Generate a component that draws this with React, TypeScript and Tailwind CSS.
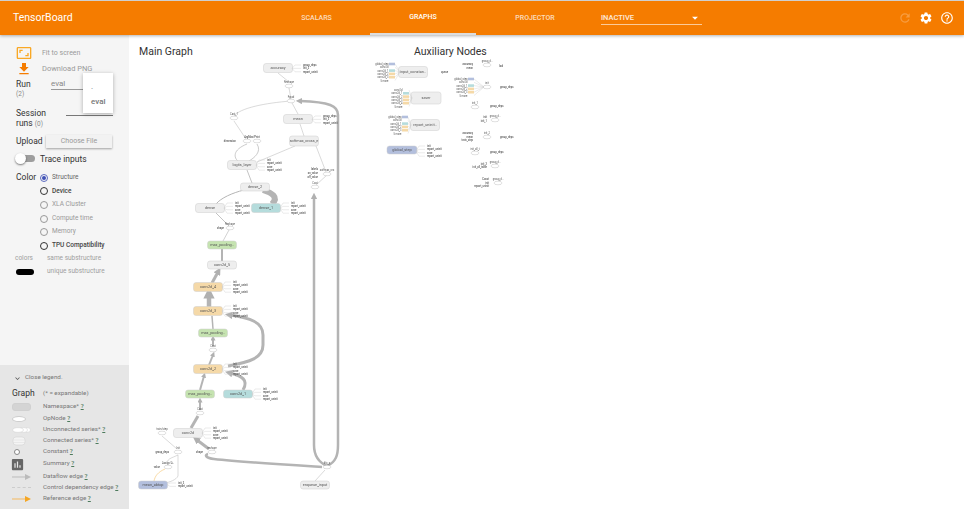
import React from 'react';
import { MdAspectRatio, MdFileDownload, MdHelpOutline, MdInsertChart, MdRefresh, MdSettings, MdArrowDropDown, MdExpandMore } from 'react-icons/md';

// --- Graph data (page coordinates, the svg viewBox shifts them into the canvas) ---

const GRAY = '#eeeeee';
const ORANGE = '#f5d9a8';
const GREEN = '#c5e3b0';
const TEAL = '#b5dcdc';
const BLUE = '#b3bfdd';

type GNode = { x: number; y: number; label: string; fill?: string; w?: number; h?: number };

const nodes: GNode[] = [
    { x: 278, y: 68, label: 'accuracy' },
    { x: 298, y: 119, label: 'mean' },
    { x: 304, y: 141, label: 'softmax_cross_e', h: 10 },
    { x: 242, y: 165, label: 'logits_layer' },
    { x: 255, y: 187, label: 'dense_2', h: 8 },
    { x: 210, y: 208, label: 'dense' },
    { x: 266, y: 208, label: 'dense_1', fill: TEAL },
    { x: 222, y: 245, label: 'max_pooling..', fill: GREEN, h: 8 },
    { x: 222, y: 265, label: 'conv2d_5', h: 8 },
    { x: 208, y: 287, label: 'conv2d_4', fill: ORANGE },
    { x: 208, y: 311, label: 'conv2d_3', fill: ORANGE },
    { x: 213, y: 333, label: 'max_pooling..', fill: GREEN, h: 8 },
    { x: 208, y: 369, label: 'conv2d_2', fill: ORANGE },
    { x: 200, y: 394, label: 'max_pooling..', fill: GREEN, h: 8 },
    { x: 238, y: 394, label: 'conv2d_1', fill: TEAL, h: 8 },
    { x: 188, y: 433, label: 'conv2d' },
    { x: 153, y: 485, label: 'mean_abtop', fill: BLUE, h: 8 },
    { x: 315, y: 485, label: 'enqueue_input', h: 8 },
    // auxiliary nodes
    { x: 413, y: 72, label: 'input_constan..', h: 11 },
    { x: 426, y: 98, label: 'saver', w: 30, h: 12 },
    { x: 425, y: 125, label: 'report_uninit..', h: 11 },
    { x: 402, y: 150, label: 'global_step', fill: BLUE, w: 30, h: 8 },
];

type GEdge = { d: string; w?: number; c?: string; arrow?: boolean };

const edges: GEdge[] = [
    { d: 'M278 73L289 82' },
    { d: 'M289 88L291 99' },
    { d: 'M291 101C265 103 240 108 234 116' },
    { d: 'M298 114L292 103' },
    { d: 'M304 136L300 124' },
    { d: 'M295 146L257 162' },
    { d: 'M316 146L326 172' },
    { d: 'M327 175L316 185' },
    { d: 'M234 121L246 139' },
    { d: 'M247 144C232 150 234 158 238 161', w: 0.7 },
    { d: 'M257 144C262 152 254 158 249 161', w: 0.7 },
    { d: 'M247 170L252 183', w: 0.8 },
    { d: 'M244 190C232 193 221 198 216 204', w: 1 },
    { d: 'M263 190C272 193 279 197 272 204', w: 6 },
    { d: 'M216 213L229 226', w: 0.8 },
    { d: 'M229 230L223 241', w: 0.6 },
    { d: 'M222 249L222 261', w: 2 },
    { d: 'M212 283L218 272', w: 3, arrow: true },
    { d: 'M209 307L209 295', w: 4.5, arrow: true },
    { d: 'M213 329L212 316', w: 1.5 },
    { d: 'M213 346L213 339', w: 2, arrow: true },
    { d: 'M209 365L213 355', w: 2, arrow: true },
    { d: 'M228 366C250 362 263 358 263 345L263 335C263 322 250 318 230 315', w: 3, arrow: true },
    { d: 'M243 390C249 380 242 376 230 373', w: 3, arrow: true },
    { d: 'M200 390L204 376', w: 2, arrow: true },
    { d: 'M200 410L200 401', w: 2, arrow: true },
    { d: 'M191 428L198 416', w: 3 },
    { d: 'M209 449L197 440', w: 3, arrow: true },
    { d: 'M322 467C290 465 240 462 214 459C206 458 204 455 208 454', w: 2.5 },
    { d: 'M327 466C318 462 314 455 314 445L314 197', w: 2.5, arrow: true },
    { d: 'M327 466C336 462 338 455 338 445L338 115C338 106 330 102 300 101', w: 2.5, arrow: true },
    { d: 'M315 481L325 470', w: 0.5 },
    { d: 'M162 436L177 449', w: 0.5 },
    { d: 'M178 455C172 458 165 459 168 465', w: 0.5 },
    { d: 'M178 455L178 476C176 480 170 482 165 483', w: 0.5 },
    { d: 'M165 469C158 472 155 476 154 481', w: 0.6, c: '#f5c26b' },
];

type Oval = { x: number; y: number; label?: string; w?: number };

const ovals: Oval[] = [
    { x: 289, y: 86, label: 'Reshape' },
    { x: 291, y: 101, label: 'Fgrad' },
    { x: 234, y: 118, label: 'Cast_1' },
    { x: 247, y: 141 },
    { x: 257, y: 141, label: '' },
    { x: 327, y: 174, label: 'softmax_cro' },
    { x: 315, y: 187, label: 'Cast' },
    { x: 230, y: 228, label: 'Reshape' },
    { x: 213, y: 350, label: 'Cast' },
    { x: 200, y: 413, label: 'Cast' },
    { x: 212, y: 452, label: 'reshape' },
    { x: 327, y: 467, label: 'fifo_q' },
    { x: 162, y: 433, label: 'train/step' },
    { x: 178, y: 452, label: 'Init' },
    { x: 168, y: 467, label: 'Assign/A..' },
    { x: 487, y: 65, label: 'group_d..' },
    { x: 487, y: 87, label: 'init' },
    { x: 475, y: 107, label: 'init_1' },
    { x: 495, y: 120, label: 'group_d..' },
    { x: 487, y: 137, label: 'init_2' },
    { x: 475, y: 153, label: 'init_all_t' },
    { x: 495, y: 166, label: 'group_d..' },
    { x: 498, y: 183, label: 'group_d..' },
];

const INIT = ['init', 'report_uninit', 'save', 'report_uninit'];

// annotations hanging off the right side of a node
const annotations: { x: number; y: number; labels: string[]; step?: number }[] = [
    { x: 293, y: 65, labels: ['group_deps', 'init_2', 'report_uninit'] },
    { x: 313, y: 116, labels: ['group_deps', 'init_2', 'report_uninit'] },
    { x: 257, y: 160, labels: INIT },
    { x: 225, y: 203, labels: INIT },
    { x: 281, y: 203, labels: INIT },
    { x: 223, y: 282, labels: INIT },
    { x: 223, y: 306, labels: INIT },
    { x: 223, y: 364, labels: INIT },
    { x: 253, y: 389, labels: INIT },
    { x: 203, y: 428, labels: INIT },
    { x: 168, y: 483, labels: ['init_2', 'report_uninit'] },
    { x: 417, y: 146, labels: INIT },
];

// tiny free standing labels: [x, y, text, anchor]
const labels: [number, number, string, 'start' | 'end' | 'middle'][] = [
    [236, 142, 'dimension', 'end'],
    [252, 137.5, 'ArgMax/Print', 'middle'],
    [318, 170, 'labels', 'end'],
    [318, 174, 'on_value', 'end'],
    [318, 177.5, 'off_value', 'end'],
    [224, 229, 'shape', 'end'],
    [203, 453, 'shape', 'end'],
    [169, 453, 'group_deps', 'end'],
    [160, 468, 'value', 'end'],
    [441, 73, 'queue', 'start'],
    [473, 65, 'accuracy', 'end'],
    [473, 69, 'mean', 'end'],
    [499, 67, 'loal', 'start'],
    [500, 88, 'group_deps', 'start'],
    [490, 107, 'group_deps', 'start'],
    [487, 118, 'init', 'end'],
    [487, 122, 'init_1', 'end'],
    [473, 134, 'accuracy', 'end'],
    [473, 138, 'mean', 'end'],
    [473, 141, 'train_step', 'end'],
    [500, 138, 'group_deps', 'start'],
    [490, 153, 'group_deps', 'start'],
    [487, 165, 'init_2', 'end'],
    [487, 168, 'init_all_table', 'end'],
    [489, 180, 'Const', 'end'],
    [489, 184, 'init', 'end'],
    [489, 187, 'report_uninit', 'end'],
];

// input stacks on the left of the auxiliary nodes
const stacks: { x: number; y: number; toX: number; items: [string, string?][] }[] = [
    { x: 394, y: 64, toX: 399, items: [['global_step', BLUE], ['conv2d'], ['conv2d_1', TEAL], ['conv2d_2', ORANGE], ['conv2d_3', ORANGE], ['5 more']] },
    { x: 408, y: 90, toX: 411, items: [['conv2d'], ['conv2d_1', TEAL], ['conv2d_2', ORANGE], ['conv2d_3', ORANGE], ['conv2d_4', ORANGE], ['5 more']] },
    { x: 407, y: 117, toX: 410, items: [['global_step', BLUE], ['conv2d'], ['conv2d_1', TEAL], ['conv2d_2', ORANGE], ['conv2d_3', ORANGE], ['5 more']] },
    { x: 473, y: 79, toX: 483, items: [['global_step', BLUE], ['conv2d'], ['conv2d_1', TEAL], ['conv2d_2', ORANGE], ['conv2d_3', ORANGE], ['5 more']] },
];

const GraphCanvas = () => (
    <svg viewBox="129 35 835 474" className="absolute inset-0 h-full w-full">
        <defs>
            <marker id="head" markerWidth="2.5" markerHeight="2.5" refX="0.8" refY="1.25" orient="auto">
                <path d="M0 0L2.5 1.25L0 2.5z" fill="#b0b0b0" />
            </marker>
        </defs>
        {edges.map((e, i) => (
            <path
                key={i}
                d={e.d}
                fill="none"
                stroke={e.c ?? '#b4b4b4'}
                strokeWidth={e.w ?? 0.5}
                markerEnd={e.arrow ? 'url(#head)' : undefined}
            />
        ))}
        {ovals.map((o, i) => (
            <g key={i}>
                <ellipse cx={o.x} cy={o.y} rx={(o.w ?? 8) / 2} ry={1.8} fill="#fff" stroke="#999" strokeWidth={0.3} />
                {o.label && <text x={o.x} y={o.y - 3} fontSize={2.6} textAnchor="middle" fill="#555">{o.label}</text>}
            </g>
        ))}
        {nodes.map((n) => {
            const w = n.w ?? 29;
            const h = n.h ?? 9;
            return (
                <g key={n.label + n.y}>
                    <rect x={n.x - w / 2} y={n.y - h / 2} width={w} height={h} rx={2.5} fill={n.fill ?? GRAY} stroke="#cfcfcf" strokeWidth={0.5} />
                    <text x={n.x} y={n.y + 1.3} fontSize={3.8} textAnchor="middle" fill="#555">{n.label}</text>
                </g>
            );
        })}
        {annotations.map((a, i) => {
            const step = a.step ?? 3.4;
            const mid = a.y + ((a.labels.length - 1) * step) / 2;
            return (
                <g key={i}>
                    {a.labels.map((t, j) => {
                        const y = a.y + j * step;
                        return (
                            <g key={j}>
                                <path d={`M${a.x - 1} ${mid}L${a.x + 2} ${y}L${a.x + 8} ${y}`} fill="none" stroke="#ccc" strokeWidth={0.4} />
                                <text x={a.x + 10} y={y + 1} fontSize={2.6} fontWeight={500} fill="#555">{t}</text>
                            </g>
                        );
                    })}
                </g>
            );
        })}
        {stacks.map((s, i) => (
            <g key={i}>
                {s.items.map(([t, c], j) => {
                    const y = s.y + j * 3.3;
                    return (
                        <g key={j}>
                            {c && <rect x={s.x - 5} y={y - 1.3} width={6} height={2.6} fill={c} />}
                            <path d={`M${s.x + 1} ${y}L${s.toX + 1} ${s.y + 8}`} stroke="#ccc" strokeWidth={0.4} />
                            <text x={s.x - 5.5} y={y + 1} fontSize={2.6} textAnchor="end" fill="#555">{t}</text>
                        </g>
                    );
                })}
            </g>
        ))}
        {labels.map(([x, y, t, a], i) => (
            <text key={i} x={x} y={y} fontSize={2.6} fontWeight={500} textAnchor={a} fill="#555">{t}</text>
        ))}
    </svg>
);

// --- Sidebar ---

const RADIOS: [string, boolean][] = [
    ['Structure', false],
    ['Device', true],
    ['XLA Cluster', false],
    ['Compute time', false],
    ['Memory', false],
    ['TPU Compatibility', true],
];

const LegendIcon = ({ kind }: { kind: string }) => {
    switch (kind) {
        case 'namespace':
            return <div className="h-[8px] w-[19px] rounded-[3px] border border-[#d0d0d0] bg-[#d4d4d4]" />;
        case 'op':
            return <div className="h-[6px] w-[14px] rounded-[50%] border border-[#cccccc] bg-white" />;
        case 'unconnected':
            return (
                <svg width="19" height="6" viewBox="0 0 19 6">
                    <ellipse cx="15" cy="3" rx="3.5" ry="2.4" fill="#fff" stroke="#ccc" strokeWidth="0.5" />
                    <ellipse cx="12" cy="3" rx="3.5" ry="2.4" fill="#fff" stroke="#ccc" strokeWidth="0.5" />
                    <ellipse cx="6" cy="3" rx="5.5" ry="2.4" fill="#fff" stroke="#ccc" strokeWidth="0.5" />
                </svg>
            );
        case 'connected':
            return (
                <svg width="14" height="10" viewBox="0 0 14 10">
                    <rect x="1" y="1" width="12" height="8" rx="3" fill="#f4f4f4" stroke="#ccc" strokeWidth="0.5" />
                    <path d="M1 4H13M1 6.5H13" stroke="#ddd" strokeWidth="0.5" />
                </svg>
            );
        case 'constant':
            return <div className="ml-[2px] h-[6px] w-[6px] rounded-full border border-[#888888] bg-white" />;
        case 'summary':
            return <MdInsertChart className="-ml-[2px] text-[15px] text-[#666666]" />;
        case 'dataflow':
            return (
                <svg width="20" height="6" viewBox="0 0 20 6">
                    <path d="M0 3H14" stroke="#bbb" strokeWidth="1" />
                    <path d="M13 0L19 3L13 6z" fill="#bbb" />
                </svg>
            );
        case 'control':
            return <div className="w-[19px] border-t border-dashed border-[#cccccc]" />;
        default:
            return (
                <svg width="20" height="6" viewBox="0 0 20 6">
                    <path d="M0 3H14" stroke="#f5b95f" strokeWidth="1" />
                    <path d="M13 0L19 3L13 6z" fill="#f5a623" />
                </svg>
            );
    }
};

const LEGEND: [string, string, number][] = [
    ['namespace', 'Namespace*', 12],
    ['op', 'OpNode', 11],
    ['unconnected', 'Unconnected series*', 11],
    ['connected', 'Connected series*', 11],
    ['constant', 'Constant', 11],
    ['summary', 'Summary', 14],
    ['dataflow', 'Dataflow edge', 11],
    ['control', 'Control dependency edge', 11],
    ['reference', 'Reference edge', 11],
];

const Sidebar = () => (
    <aside className="relative flex w-[129px] shrink-0 flex-col justify-between bg-[#f5f5f5]">
        <div className="pl-[16px] pt-[11px] text-[#333333]">
            <div className="flex h-[14px] items-center gap-[11px]">
                <MdAspectRatio className="text-[16px] text-[#f9a825]" />
                <span className="-ml-[1px] text-[7px] text-[#9a9a9a]">Fit to screen</span>
            </div>
            <div className="mt-[1px] flex h-[15px] items-center gap-[11px]">
                <MdFileDownload className="text-[16px] text-[#f57c00]" />
                <span className="-ml-[1px] text-[7.5px] text-[#9a9a9a]">Download PNG</span>
            </div>
            <div className="mt-[1px] flex h-[24px] items-start">
                <div className="w-[35px] leading-none">
                    <div className="mt-[3px] text-[8.5px]">Run</div>
                    <div className="mt-[2px] text-[6.5px] text-[#888888]">(2)</div>
                </div>
                <div className="h-[13px] w-[32px] border-b border-[#999999] text-[8px] leading-[13px] text-[#888888]">eval</div>
            </div>
            <div className="mt-[7px] flex h-[24px] items-start">
                <div className="w-[50px] text-[8.5px] leading-[10px]">
                    Session
                    <br />
                    runs <span className="text-[6.5px] text-[#888888]">(0)</span>
                </div>
                <div className="h-[8px] w-[47px] border-b border-[#777777]" />
            </div>
            <div className="mt-[2px] flex h-[15px] items-center">
                <div className="w-[30px] text-[8.5px]">Upload</div>
                <div className="flex h-[13px] w-[66px] items-center justify-center bg-[#f2f2f2] text-[7px] text-[#999999] shadow-[0_1px_2px_rgba(0,0,0,0.35)]">Choose File</div>
            </div>
            <div className="relative mt-[3px] flex h-[14px] items-center pl-[24px] text-[8.5px]">
                <div className="absolute left-[3px] top-[3px] h-[7px] w-[16px] rounded-full bg-[#9e9e9e]" />
                <div className="absolute -left-[1px] top-[1px] h-[11px] w-[11px] rounded-full bg-white shadow-[0_1px_2px_rgba(0,0,0,0.5)]" />
                Trace inputs
            </div>
            <div className="mt-[5px] flex">
                <div className="w-[24px] text-[8.5px] leading-[13px]">Color</div>
                <div className="flex flex-col">
                    {RADIOS.map(([label, dark], i) => (
                        <div key={label} className="flex h-[13.6px] items-center gap-[4px]">
                            <div className={`flex h-[8px] w-[8px] items-center justify-center rounded-full border ${i === 0 ? 'border-[#5c6bc0]' : dark ? 'border-[#333333]' : 'border-[#999999]'}`}>
                                {i === 0 && <div className="h-[4px] w-[4px] rounded-full bg-[#3f51b5]" />}
                            </div>
                            <span className={`whitespace-nowrap text-[6.5px] ${dark ? 'font-medium text-[#444444]' : i === 0 ? 'text-[#666666]' : 'text-[#999999]'}`}>{label}</span>
                        </div>
                    ))}
                </div>
            </div>
            <div className="flex h-[13px] items-center text-[6.5px] text-[#a0a0a0]">
                <span className="-ml-[1px] w-[32px]">colors</span>
                <span>same substructure</span>
            </div>
            <div className="flex h-[12px] items-center text-[6.5px] text-[#a0a0a0]">
                <div className="h-[6px] w-[18px] rounded-[3px] bg-black" />
                <span className="ml-[13px]">unique substructure</span>
            </div>
        </div>

        {/* dropdown open over the run selector */}
        <div className="absolute left-[83px] top-[38px] flex h-[40px] w-[30px] flex-col bg-white pl-[8px] text-[8px] text-[#777777] shadow-[0_1px_4px_rgba(0,0,0,0.3)]">
            <span className="mt-[9px] h-[14px] leading-[10px]">.</span>
            <span className="font-medium">eval</span>
        </div>

        <div className="h-[144px] bg-[#e6e6e6] pl-[12px] pt-[8px] text-[6.25px] text-[#777777]">
            <div className="flex h-[10px] items-center gap-[3px] pl-[1px]">
                <MdExpandMore className="text-[9px] text-[#555555]" />
                Close legend.
            </div>
            <div className="mt-[4px] flex h-[13px] items-center">
                <span className="w-[31px] text-[8.5px] text-[#333333]">Graph</span>
                <span>(* = expandable)</span>
            </div>
            <div className="mt-[1px] flex flex-col">
                {LEGEND.map(([kind, label, h]) => (
                    <div key={kind} className="flex items-center" style={{ height: h }}>
                        <div className="flex w-[31px] items-center">
                            <LegendIcon kind={kind} />
                        </div>
                        <span className="whitespace-nowrap">
                            {label} <span className="font-medium text-[#4d7a5c] underline">?</span>
                        </span>
                    </div>
                ))}
            </div>
        </div>
    </aside>
);

export default function App() {
    return (
        <div className="flex h-[509px] w-[964px] flex-col overflow-hidden bg-white font-['Roboto',sans-serif]">
            <header className="z-10 flex h-[35px] shrink-0 items-center border-t border-[#cfcfcf] bg-[#f57c00] text-white shadow-[0_1px_3px_rgba(0,0,0,0.3)]">
                <div className="w-[263px] pl-[13px] text-[10.5px]">TensorBoard</div>
                <div className="flex h-full items-center text-[7px] font-medium">
                    <div className="flex h-full w-[107px] items-center justify-center text-white/75">SCALARS</div>
                    <div className="flex h-full w-[106px] items-center justify-center border-b-2 border-[#dddddd]">GRAPHS</div>
                    <div className="flex h-full w-[118px] items-center justify-center text-white/75">PROJECTOR</div>
                </div>
                <div className="ml-[7px] flex h-[14px] w-[101px] items-center justify-between border-b border-white/60 text-[7.5px] font-medium text-white/85">
                    INACTIVE
                    <MdArrowDropDown className="text-[14px] text-white" />
                </div>
                <div className="ml-auto flex items-center gap-[7px] pr-[10px]">
                    <MdRefresh className="text-[14px] text-white/25" />
                    <MdSettings className="text-[14px]" />
                    <MdHelpOutline className="text-[14px]" />
                </div>
            </header>
            <div className="flex min-h-0 flex-1">
                <Sidebar />
                <main className="relative flex-1">
                    <div className="absolute inset-0 blur-[0.35px]">
                        <GraphCanvas />
                    </div>
                    <div className="relative flex pt-[9px] text-[10.5px] text-[#333333]">
                        <h2 className="ml-[10px] w-[275px]">Main Graph</h2>
                        <h2>Auxiliary Nodes</h2>
                    </div>
                </main>
            </div>
        </div>
    );
}
